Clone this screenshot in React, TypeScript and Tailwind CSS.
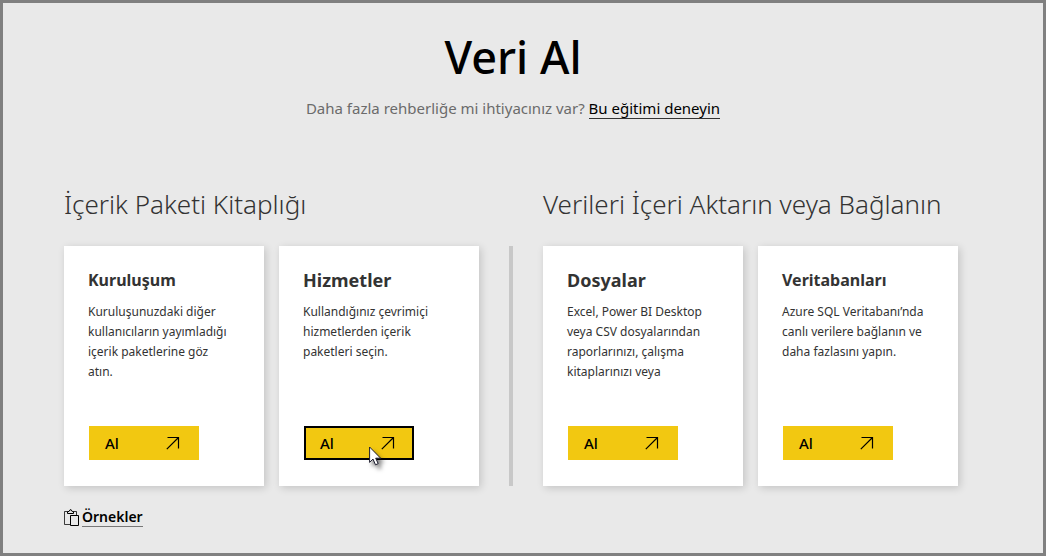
import React from 'react';

type Source = { title: string; text: string; selected?: boolean; large?: boolean };

const library: Source[] = [
  {
    title: 'Kuruluşum',
    text: 'Kuruluşunuzdaki diğer kullanıcıların yayımladığı içerik paketlerine göz atın.',
  },
  {
    title: 'Hizmetler',
    text: 'Kullandığınız çevrimiçi hizmetlerden içerik paketleri seçin.',
    selected: true,
    large: true,
  },
];

const connections: Source[] = [
  {
    title: 'Dosyalar',
    text: 'Excel, Power BI Desktop veya CSV dosyalarından raporlarınızı, çalışma kitaplarınızı veya',
    large: true,
  },
  {
    title: 'Veritabanları',
    text: 'Azure SQL Veritabanı’nda canlı verilere bağlanın ve daha fazlasını yapın.',
  },
];

function ArrowIcon() {
  return (
    <svg width="14" height="14" viewBox="0 0 14 14" fill="none" stroke="currentColor" strokeWidth="1.2" aria-hidden="true">
      <path d="M1.5 1.5H12.5V12.5M12.5 1.5L.8 13.2" />
    </svg>
  );
}

function ClipboardIcon() {
  return (
    <svg width="15" height="17" viewBox="0 0 15 17" fill="none" stroke="currentColor" aria-hidden="true">
      <path d="M6 15.5H.5V2.5H3.5M9.5 2.5H12.5V6" strokeOpacity=".75" />
      <path d="M3.5 4.5V2.5H5L6 .8H7.2L8.2 2.5H9.5V4.5Z" />
      <path d="M6.5 6.5H14.5V16.5H6.5Z" />
    </svg>
  );
}

function Pointer() {
  return (
    <svg
      className="pointer-events-none absolute left-[65px] top-5 drop-shadow-[3px_4px_2px_rgba(0,0,0,0.5)]"
      width="13"
      height="20"
      viewBox="0 0 13 20"
      aria-hidden="true"
    >
      <path d="M.6 1V16.4L4 13.1L6.5 18.8L9.2 17.6L6.7 12.2H11.6Z" fill="#fff" stroke="#1c1c2e" strokeWidth="1" />
    </svg>
  );
}

function Card({ title, text, selected, large }: Source) {
  return (
    <article className="flex min-h-60 flex-col items-start bg-white pt-5 pr-[30px] pb-[26px] pl-6 shadow-[2px_2px_8px_rgba(0,0,0,0.16)]">
      <h3 className={large ? 'text-lg leading-7 font-bold' : 'text-base leading-7 font-bold'}>{title}</h3>
      <p className="mt-2 text-xs leading-5">{text}</p>
      <div className="relative mt-auto ml-px">
        <button
          type="button"
          className={
            selected
              ? 'flex h-[34px] w-[110px] items-center justify-between border-2 border-black bg-[#f2c811] pr-[17px] pl-3.5 text-[15px] font-medium text-black'
              : 'flex h-[34px] w-[110px] items-center justify-between bg-[#f2c811] pr-[19px] pl-4 text-[15px] font-medium text-black'
          }
        >
          Al
          <ArrowIcon />
        </button>
        {selected && <Pointer />}
      </div>
    </article>
  );
}

function Group({ heading, sources }: { heading: string; sources: Source[] }) {
  return (
    <section className="min-w-0 flex-1">
      <h2 className="text-[26px] leading-10 font-light whitespace-nowrap">{heading}</h2>
      <div className="mt-[22px] grid grid-cols-2 gap-[15px]">
        {sources.map((source) => (
          <Card key={source.title} {...source} />
        ))}
      </div>
    </section>
  );
}

export default function App() {
  return (
    <main className="min-h-screen border-3 border-[#808080] bg-[#e9e9e9] pr-[81px] pb-4 pl-[61px] font-['Noto_Sans','Open_Sans',sans-serif] text-[#333]">
      <header className="pt-7 text-center">
        <h1 className="text-[45px] leading-[52px] font-medium text-black">Veri Al</h1>
        <p className="mt-[13px] text-[15px] leading-6 text-[#6b6b6b]">
          Daha fazla rehberliğe mi ihtiyacınız var?{' '}
          <a href="#egitim" className="inline-block border-b border-[#333] leading-5 text-black">
            Bu eğitimi deneyin
          </a>
        </p>
      </header>
      <div className="mt-16 mr-1 flex gap-[30px]">
        <Group heading="İçerik Paketi Kitaplığı" sources={library} />
        <div className="mt-[62px] w-1 bg-[#c8c8c8]" />
        <Group heading="Verileri İçeri Aktarın veya Bağlanın" sources={connections} />
      </div>
      <a href="#ornekler" className="mt-[22px] inline-flex items-center gap-[3px] text-black">
        <ClipboardIcon />
        <span className="border-b border-[#777] text-sm leading-[18px] font-semibold">Örnekler</span>
      </a>
    </main>
  );
}
